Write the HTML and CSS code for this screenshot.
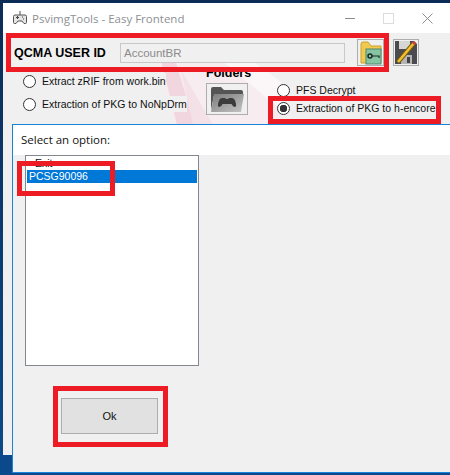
FILE: index.html
```html
<!DOCTYPE html>
<html>
<head>
  <meta name="viewport" content="width=device-width, initial-scale=1">
  <link rel="stylesheet" href="styles.css">
  <title>PsvimgTools - Easy Frontend</title>
</head>
<body>

<div class="mainWindow">
  <div class="titleBar">
    <svg class="appIcon" width="16" height="16" viewBox="0 0 16 16">
      <path d="M8 1v4M3 5h10q1.500 0 1.500 1.500v6q0 1-1 1h-1.500l-2-2.500h-4l-2 2.500h-1.500q-1 0-1-1v-6q0-1.500 1.500-1.500z" fill="#e4e4e4" stroke="#555" stroke-width="1"/>
      <path d="M4 7.500h3M5.500 6v3M10 7h1M11 9h1" stroke="#444" stroke-width="1"/>
    </svg>
    <span class="titleText">PsvimgTools - Easy Frontend</span>
    <div class="windowControls">
      <span class="minimize"></span>
      <span class="maximize"></span>
      <svg width="11" height="11" viewBox="0 0 11 11" class="closeIcon">
        <path d="M0.500 0.500l10 10M10.500 0.500l-10 10" stroke="#8c8c8c" stroke-width="1" fill="none"/>
      </svg>
    </div>
  </div>

  <div class="content">
    <svg class="artwork" width="130" height="65" viewBox="0 0 130 65">
      <polygon points="4,0 70,0 130,30 130,65 24,65" fill="#f7ecf0"/>
      <polygon points="10,0 24,0 44,65 26,65" fill="#f1d6df"/>
      <polygon points="70,0 100,0 130,22 130,50" fill="#fbf6f8"/>
      <polygon points="30,10 62,65 42,65" fill="#f4e0e7"/>
    </svg>

    <div class="idRow">
      <label class="idLabel">QCMA USER ID</label>
      <div class="idInput">AccountBR</div>
      <button class="iconBtn folderBtn">
        <svg width="22" height="24" viewBox="0 0 22 24">
          <path d="M1 22V3q0-2 2-2h5l3 4h10v17z" fill="#f2c94f" stroke="#c9a230" stroke-width="1"/>
          <rect x="6" y="8" width="15" height="15" fill="#86c4a4" stroke="#4c8a6c"/>
          <circle cx="10" cy="15" r="2" fill="none" stroke="#1c2c26" stroke-width="1.500"/>
          <path d="M12 15h7v2" stroke="#1c2c26" stroke-width="1.200" fill="none"/>
        </svg>
      </button>
      <button class="iconBtn saveBtn">
        <svg width="22" height="23" viewBox="0 0 22 23">
          <path d="M0 0h19l3 3v20H0z" fill="#4b4b4f"/>
          <rect x="4" y="0" width="11" height="8" fill="#d6d6d6"/>
          <rect x="6" y="14" width="11" height="9" fill="#b5b5b5"/>
          <rect x="12" y="16" width="3" height="6" fill="#444"/>
          <path d="M3 21L19 2" stroke="#7a5a10" stroke-width="4.500"/>
          <path d="M3 21L19 2" stroke="#f2c22e" stroke-width="2.500"/>
          <path d="M18 3l2-2" stroke="#d7403a" stroke-width="3"/>
        </svg>
      </button>
    </div>

    <div class="optionsRow">
      <div class="radioCol leftCol">
        <div class="radioItem"><span class="radio"></span><span class="radioText">Extract zRIF from work.bin</span></div>
        <div class="radioItem"><span class="radio"></span><span class="radioText">Extraction of PKG to NoNpDrm</span></div>
      </div>
      <div class="foldersCol">
        <div class="foldersLabel">Folders</div>
        <button class="iconBtn gamesBtn">
          <svg width="36" height="28" viewBox="0 0 36 28">
            <defs>
              <linearGradient id="folderFront" x1="0" y1="0" x2="1" y2="1">
                <stop offset="0" stop-color="#7c7c7c"/>
                <stop offset="1" stop-color="#c4c4c4"/>
              </linearGradient>
            </defs>
            <path d="M2 25V4q0-2 2-2h8l3 3h17q2 0 2 2v3H5z" fill="#555"/>
            <path d="M2 27L5 9h30l-3 18z" fill="url(#folderFront)"/>
            <path d="M13 13h3l1 1h2l1-1h3q3 0 4 6 .500 3-1.500 3-1.500 0-3-3h-9q-1.500 3-3 3-2 0-1.500-3 1-6 4-6z" fill="#3c3c3c"/>
          </svg>
        </button>
      </div>
      <div class="radioCol rightCol">
        <div class="radioItem"><span class="radio"></span><span class="radioText">PFS Decrypt</span></div>
        <div class="radioItem"><span class="radio checked"></span><span class="radioText">Extraction of PKG to h-encore</span></div>
      </div>
    </div>
  </div>
</div>

<div class="dialog">
  <div class="dialogTitle">Select an option:</div>
  <div class="dialogBody">
    <div class="listBox">
      <div class="listItem exitItem">Exit</div>
      <div class="listItem selected">PCSG90096</div>
    </div>
    <button class="okBtn">Ok</button>
  </div>
</div>

<!-- red marks drawn over the screenshot -->
<div class="mark markId"></div>
<div class="mark markEncore"></div>
<div class="mark markList"></div>
<div class="mark markOk"></div>

</body>
</html>
```

FILE: styles.css
```css
html, body {
  height: 100%;
}

body {
  position: relative;
  margin: 0;
  overflow: hidden;
  width: 450px;
  height: 475px;
  background: linear-gradient(to bottom, #0b2c55, #0b4a8c);
  font-family: 'Liberation Sans', Arial, sans-serif;
  font-size: 11px;
  color: #111;
}

button {
  padding: 0;
  font-family: inherit;
}

.mainWindow {
  position: absolute;
  left: 3px;
  top: 3px;
  width: 447px;
  height: 452px;
  background-color: #f0f0f0;
}

.titleBar {
  display: flex;
  align-items: center;
  height: 30px;
  padding-left: 9px;
  background-color: #fff;
}

.titleText {
  margin-left: 4px;
  font-family: 'Open Sans', sans-serif;
  font-size: 11.500px;
  color: #8d9095;
}

.windowControls {
  display: flex;
  align-items: center;
  gap: 28px;
  margin-left: auto;
  padding-right: 17px;
}

.minimize {
  width: 10px;
  height: 1px;
  background-color: #8c8c8c;
}

.maximize {
  width: 9px;
  height: 9px;
  border: 1px solid #dcdcdc;
}

.content {
  position: relative;
  height: 422px;
}

.artwork {
  position: absolute;
  left: 148px;
  top: 27px;
}

.idRow {
  position: relative;
  display: flex;
  align-items: center;
  height: 27px;
  padding: 6px 0 0 11px;
}

.idLabel {
  width: 106px;
  font-size: 12.500px;
  font-weight: bold;
  color: #000;
}

.idInput {
  box-sizing: border-box;
  width: 225px;
  height: 20px;
  padding-left: 3px;
  line-height: 18px;
  font-size: 11.500px;
  color: #8b8b8b;
  background-color: #f0f0f0;
  border: 1px solid #c8c8c8;
}

.iconBtn {
  display: flex;
  align-items: center;
  justify-content: center;
  box-sizing: border-box;
  background-color: #f0f0f0;
  border: 1px solid #adadad;
}

.folderBtn {
  width: 27px;
  height: 27px;
  margin-left: 12px;
}

.saveBtn {
  width: 26px;
  height: 27px;
  margin-left: 9px;
}

.optionsRow {
  position: relative;
  display: flex;
}

.radioCol {
  display: flex;
  flex-direction: column;
}

.leftCol {
  width: 184px;
  padding: 5px 0 0 20px;
  gap: 3px;
}

.rightCol {
  padding: 15px 0 0 29px;
}

.radioItem {
  display: flex;
  align-items: center;
  gap: 6px;
  height: 20px;
  white-space: nowrap;
}

.rightCol .radioItem {
  height: 18px;
}

.radioText {
  background-color: #f0f0f0;
  padding: 2px 0;
  font-size: 10.500px;
}

.radio {
  box-sizing: border-box;
  width: 13px;
  height: 13px;
  border: 1px solid #333;
  border-radius: 50%;
  background-color: #fff;
}

.radio.checked {
  background: radial-gradient(circle, #333 0, #333 3.500px, #fff 4px);
}

.foldersCol {
  width: 42px;
  margin-left: -1px;
}

.foldersLabel {
  height: 17px;
  line-height: 14px;
  font-size: 12.500px;
  font-weight: bold;
  color: #000;
}

.gamesBtn {
  width: 42px;
  height: 32px;
}

.dialog {
  position: absolute;
  left: 12px;
  top: 124px;
  box-sizing: border-box;
  width: 438px;
  height: 349px;
  background-color: #f0f0f0;
  border: 1px solid #1883d7;
  border-right: 0;
}

.dialogTitle {
  box-sizing: border-box;
  height: 30px;
  padding: 7px 0 0 8px;
  font-family: 'Open Sans', sans-serif;
  font-size: 11.500px;
  color: #111;
  background-color: #fff;
}

.dialogBody {
  display: flex;
  flex-direction: column;
  align-items: flex-start;
  padding-left: 12px;
}

.listBox {
  box-sizing: border-box;
  width: 174px;
  height: 211px;
  padding: 1px;
  background-color: #fff;
  border: 1px solid #828790;
}

.listItem {
  height: 13px;
  padding-left: 2px;
  line-height: 13px;
  font-size: 10.500px;
}

.exitItem {
  padding-left: 8px;
}

.selected {
  color: #fff;
  background-color: #0078d7;
}

.okBtn {
  box-sizing: border-box;
  width: 97px;
  height: 36px;
  margin: 32px 0 0 36px;
  font-size: 11px;
  color: #111;
  background-color: #e1e1e1;
  border: 1px solid #adadad;
}

.mark {
  position: absolute;
  box-sizing: border-box;
  border: 5px solid #ed1c24;
}

.markId {
  left: 6px;
  top: 33px;
  width: 383px;
  height: 39px;
}

.markEncore {
  left: 268px;
  top: 96px;
  width: 173px;
  height: 28px;
}

.markList {
  left: 17px;
  top: 161px;
  width: 98px;
  height: 35px;
}

.markOk {
  left: 53px;
  top: 386px;
  width: 115px;
  height: 61px;
}
```
